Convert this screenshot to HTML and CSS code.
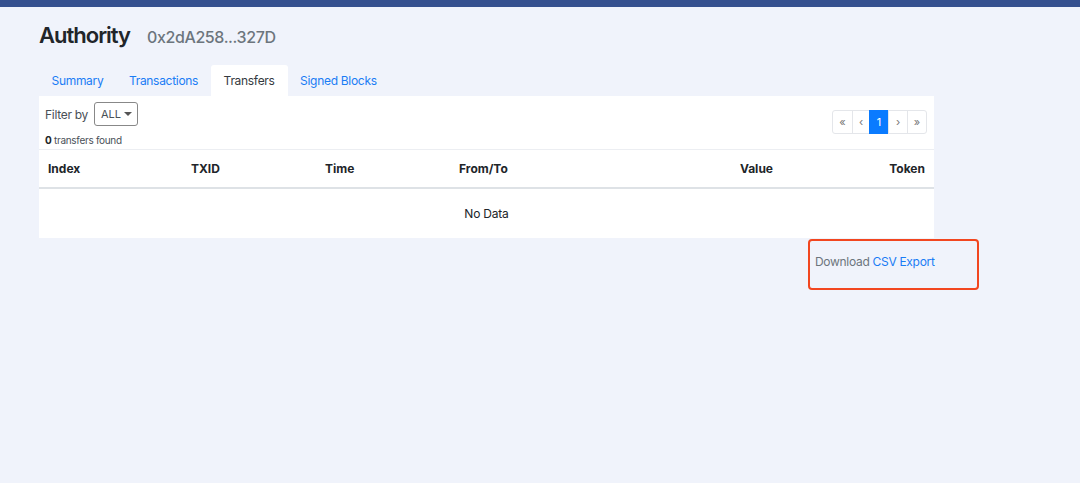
FILE: index.html
```html
<!DOCTYPE html>
<html lang="en">
<head>
    <meta charset="UTF-8">
    <meta name="viewport" content="width=device-width, initial-scale=1.0">
    <title>Authority</title>
    <link rel="stylesheet" href="styles.css">
</head>
<body>
    <div class="topbar"></div>
    <div class="container">
        <div class="page-title">
            <h1>Authority</h1>
            <span class="address">0x2dA258...327D</span>
        </div>

        <ul class="tabs">
            <li><a>Summary</a></li>
            <li><a>Transactions</a></li>
            <li class="active"><a>Transfers</a></li>
            <li><a>Signed Blocks</a></li>
        </ul>

        <div class="card">
            <div class="card-top">
                <div class="filters">
                    <div class="filter-row">
                        <span class="filter-label">Filter by</span>
                        <button class="select-btn">ALL <span class="caret"></span></button>
                    </div>
                    <div class="found"><b>0</b> transfers found</div>
                </div>
                <ul class="pagination">
                    <li>&laquo;</li>
                    <li>&lsaquo;</li>
                    <li class="current">1</li>
                    <li>&rsaquo;</li>
                    <li>&raquo;</li>
                </ul>
            </div>
            <table class="transfers">
                <colgroup>
                    <col class="c-index">
                    <col class="c-txid">
                    <col class="c-time">
                    <col class="c-fromto">
                    <col class="c-value">
                    <col class="c-token">
                </colgroup>
                <thead>
                    <tr>
                        <th>Index</th>
                        <th>TXID</th>
                        <th>Time</th>
                        <th>From/To</th>
                        <th class="right">Value</th>
                        <th class="right">Token</th>
                    </tr>
                </thead>
                <tbody>
                    <tr>
                        <td colspan="6" class="empty">No Data</td>
                    </tr>
                </tbody>
            </table>
        </div>

        <div class="export-row">
            <div class="export-box">
                Download <a>CSV Export</a>
            </div>
        </div>
    </div>
</body>
</html>
```

FILE: styles.css
```css
body {
    font-family: Inter, "Liberation Sans", sans-serif;
    margin: 0;
    padding: 0;
    background-color: #f0f3fb;
    color: #212529;
}
.topbar {
    height: 7px;
    background-color: #35508f;
}
.container {
    width: 895px;
    margin-left: 39px;
}
.page-title {
    display: flex;
    align-items: baseline;
    gap: 17px;
    padding-top: 15px;
}
h1 {
    margin: 0;
    font-size: 22px;
    font-weight: 600;
    color: #212529;
    letter-spacing: -1px;
}
.address {
    font-size: 16px;
    color: #6c757d;
    font-weight: 500;
    letter-spacing: -0.4px;
}
.tabs {
    list-style: none;
    display: flex;
    margin: 17px 0 0 0;
    padding: 0;
}
.tabs li a {
    display: block;
    padding: 8px 13px 0 12.5px;
    height: 23px;
    font-size: 12px;
    letter-spacing: -0.3px;
    color: #1a7cf5;
    border-radius: 3px 3px 0 0;
    cursor: pointer;
}
.tabs li.active a {
    background-color: #fff;
    color: #343a40;
}
.card {
    background-color: #fff;
}
.card-top {
    display: flex;
    justify-content: space-between;
    padding: 6px 7px 0 6px;
    border-bottom: 1px solid #eceef2;
    height: 47px;
}
.filter-row {
    display: flex;
    align-items: center;
    gap: 6px;
}
.filter-label {
    font-size: 12px;
    letter-spacing: -0.3px;
    color: #495057;
}
.select-btn {
    display: flex;
    align-items: center;
    gap: 3px;
    height: 24px;
    padding: 0 5px 0 6px;
    font-family: inherit;
    font-size: 11px;
    color: #495057;
    background-color: #fff;
    border: 1px solid #888;
    border-radius: 3px;
}
.caret {
    width: 0;
    height: 0;
    border-left: 4px solid transparent;
    border-right: 4px solid transparent;
    border-top: 4px solid #555;
}
.found {
    margin-top: 8px;
    font-size: 10px;
    letter-spacing: -0.3px;
    color: #495057;
}
.found b {
    color: #212529;
}
.pagination {
    list-style: none;
    display: flex;
    margin: 8px 0 0 0;
    padding: 0;
    height: 24px;
}
.pagination li {
    width: 18px;
    height: 22px;
    line-height: 22px;
    text-align: center;
    font-size: 11px;
    color: #777;
    border: 1px solid #e4e6ea;
    margin-left: -1px;
}
.pagination li:first-child {
    width: 19px;
    border-radius: 3px 0 0 3px;
}
.pagination li:nth-child(2) {
    width: 16px;
}
.pagination li:last-child {
    border-radius: 0 3px 3px 0;
}
.pagination li.current {
    background-color: #0a7bff;
    border-color: #0a7bff;
    color: #fff;
}
table {
    width: 100%;
    border-collapse: collapse;
    table-layout: fixed;
}
.c-index { width: 143px; }
.c-txid { width: 134px; }
.c-time { width: 134px; }
.c-fromto { width: 200px; }
.c-value { width: 132px; }
th {
    height: 37px;
    padding: 0 9px;
    text-align: left;
    font-size: 12px;
    font-weight: 700;
    color: #212529;
    border-bottom: 2px solid #dee2e6;
}
th.right {
    text-align: right;
}
td.empty {
    height: 47px;
    text-align: center;
    font-size: 12px;
    letter-spacing: -0.2px;
    color: #212529;
}
.export-row {
    display: flex;
    justify-content: flex-end;
    margin-right: -45px;
    margin-top: 1px;
}
.export-box {
    width: 162px;
    height: 47px;
    padding: 0 0 0 5px;
    line-height: 41px;
    font-size: 12px;
    letter-spacing: -0.3px;
    color: #6c757d;
    border: 2px solid #f2461f;
    border-radius: 4px;
}
.export-box a {
    color: #1a7cf5;
    cursor: pointer;
}
```
